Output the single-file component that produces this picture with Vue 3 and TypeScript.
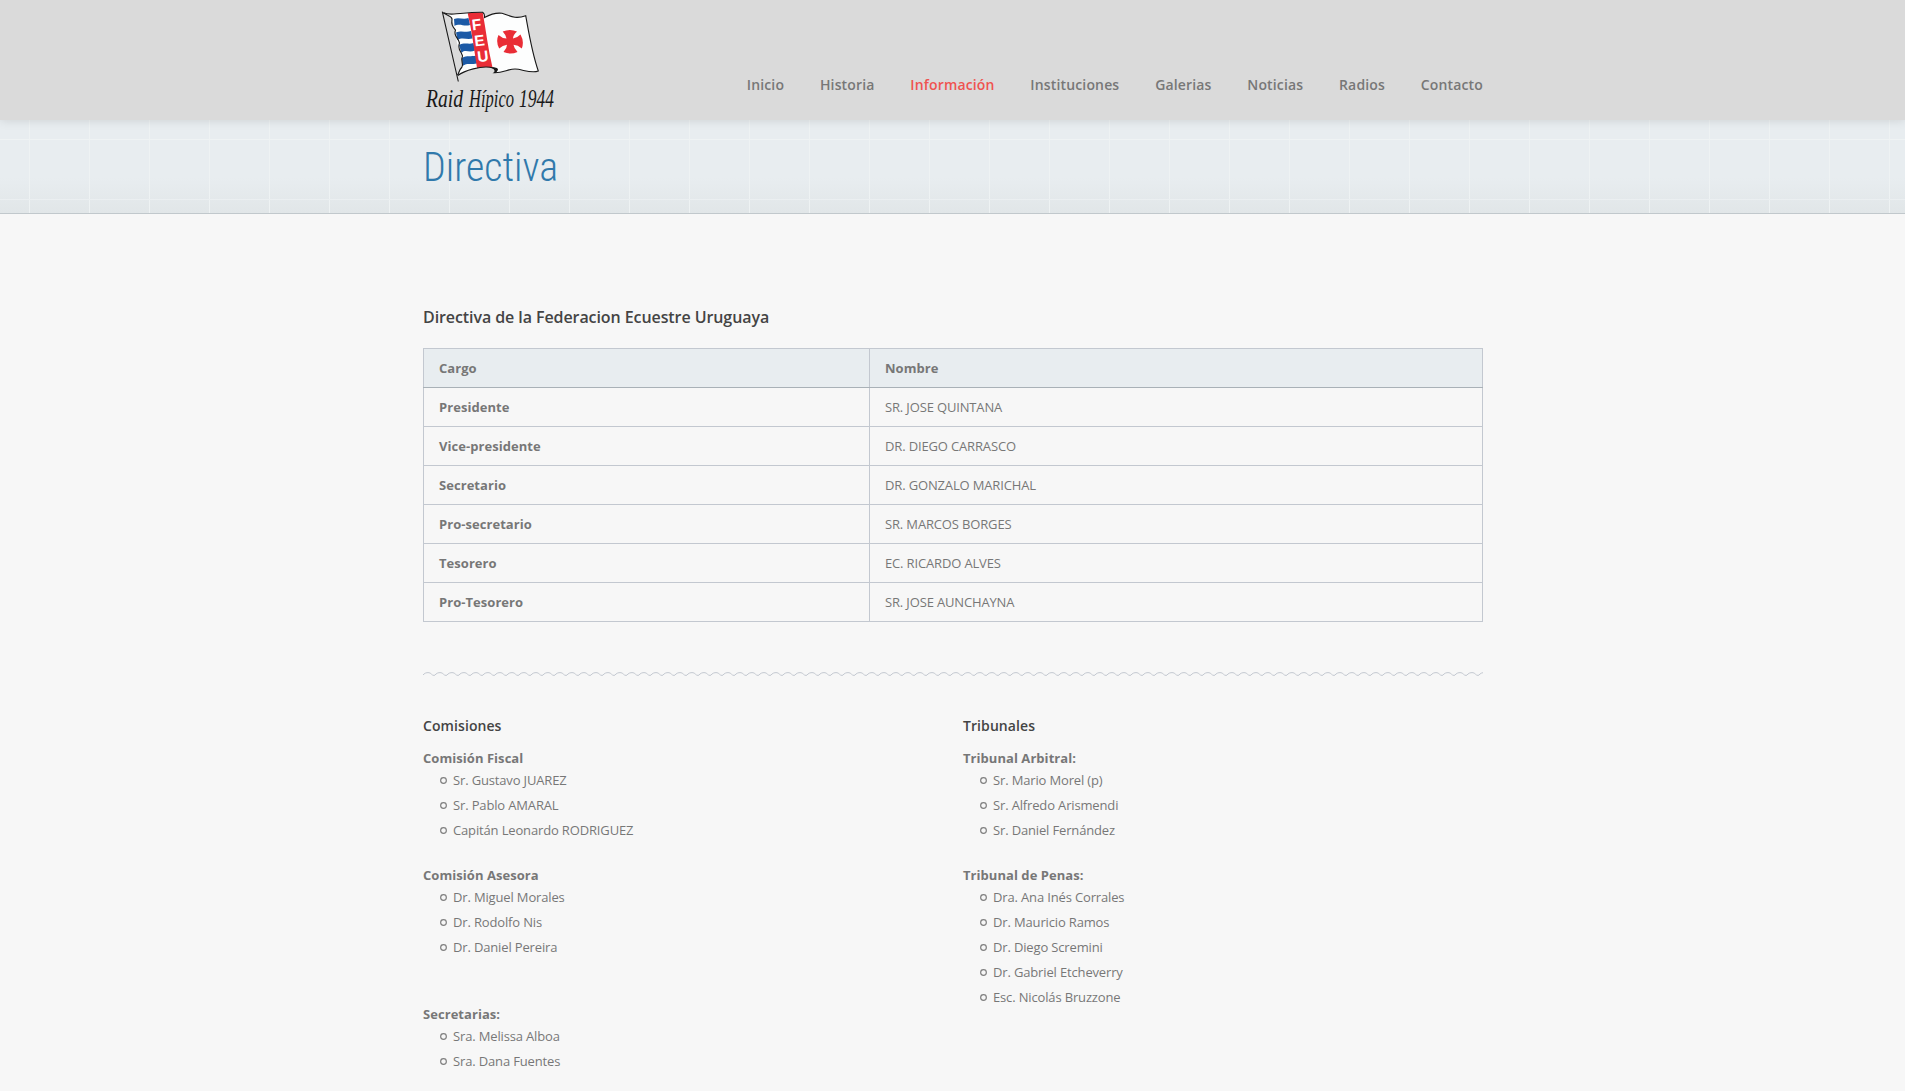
<script setup lang="ts">
interface Group {
  title: string
  people: string[]
  extra?: boolean
}

const nav: string[] = ['Inicio', 'Historia', 'Información', 'Instituciones', 'Galerias', 'Noticias', 'Radios', 'Contacto']
const active = 'Información'

const rows: [string, string][] = [
  ['Presidente', 'SR. JOSE QUINTANA'],
  ['Vice-presidente', 'DR. DIEGO CARRASCO'],
  ['Secretario', 'DR. GONZALO MARICHAL'],
  ['Pro-secretario', 'SR. MARCOS BORGES'],
  ['Tesorero', 'EC. RICARDO ALVES'],
  ['Pro-Tesorero', 'SR. JOSE AUNCHAYNA'],
]

const columns: { heading: string; groups: Group[] }[] = [
  {
    heading: 'Comisiones',
    groups: [
      { title: 'Comisión Fiscal', people: ['Sr. Gustavo JUAREZ', 'Sr. Pablo AMARAL', 'Capitán Leonardo RODRIGUEZ'] },
      { title: 'Comisión Asesora', people: ['Dr. Miguel Morales', 'Dr. Rodolfo Nis', 'Dr. Daniel Pereira'], extra: true },
      { title: 'Secretarias:', people: ['Sra. Melissa Alboa', 'Sra. Dana Fuentes'] },
    ],
  },
  {
    heading: 'Tribunales',
    groups: [
      { title: 'Tribunal Arbitral:', people: ['Sr. Mario Morel (p)', 'Sr. Alfredo Arismendi', 'Sr. Daniel Fernández'] },
      {
        title: 'Tribunal de Penas:',
        people: ['Dra. Ana Inés Corrales', 'Dr. Mauricio Ramos', 'Dr. Diego Scremini', 'Dr. Gabriel Etcheverry', 'Esc. Nicolás Bruzzone'],
      },
    ],
  },
]
</script>

<template>
  <div class="page">
    <header class="header">
      <div class="container header-row">
        <svg class="logo" width="136" height="120" viewBox="0 0 136 120" role="img">
          <!-- flag cloth -->
          <path d="M20.300 12.700Q25 14.500 31 14C38 13.500 50 12 59.700 12.300L62 17.500C68 14 73 12.500 79 13.300C86 15 91 20 102.700 15.700C106 34 109 53 115.300 71C108 74 99 69 92 69C85 69 80 73 71.300 72.700Q77 69 67 67.300C58 66 42 70 34.700 75.500L40 65L38 55L34 43L32 31L29 18Z" fill="#fdfefe" />
          <path d="M31 19C36 17 40 20 45.500 18L47 25C41 27 37 23 31.500 26ZM33 32.500C39 30 43 33 48 31L49.500 38.500C44 40 39 37 34.500 40ZM36 45C42 42 46 45 50.500 43L52 50.500C46 53 42 49 38.500 53ZM39 58C44 55 48 57 53 55.500L55 63C49 65.500 45 62 39.500 66Z" fill="#1c5aa6" />
          <path d="M44.700 13.200C50 12.500 55 12.500 59.700 12.500C63 30 65 49 69.500 67.500C64 66.500 59 67 54 68C51 49 49 31 44.700 13.200Z" fill="#e92d36" />
          <path d="M20.300 12.700Q25 14.500 31 14C38 13.500 50 12 59.700 12.300Q62 14 61.500 17.500C68 14 73 12.500 79 13.300C86 15 91 20 102.700 15.700C106 34 109 53 115.300 71C108 74 99 69 92 69C85 69 80 73 71.300 72.700Q77 69 67 67.300C58 66 42 70 34.700 75.500" fill="none" stroke="#181818" stroke-width="1.100" />
          <path d="M19.300 11.700L35.300 81.500M20.300 12.700C25 16 29 16 29 19C28 25 30 27 32.500 30C30 36 35 37 36.500 43C34 49 38 51 39.500 56C37 61 41 64 39 67C36 70 36 73 34.700 75" fill="none" stroke="#181818" stroke-width="1.100" />
          <path d="M66 67.200C71 67 75 67.500 75 69.500C75 71 73 72.500 71 73C72.500 70 71 68.500 66 67.200Z" fill="#181818" />
          <!-- flared cross -->
          <path d="M79.700 31.500Q87 28.500 94 31.500Q90 35 90 38.500Q94 38 97.500 34.500Q101.500 41.500 98.800 48.500Q95 45 90.500 44.800Q91 48.500 94.500 52Q87.500 55 80.500 52Q84 48.500 84 44.800Q79.500 45.500 76.200 48.500Q72.500 41.500 75.500 35Q79 38.300 83.500 38.500Q83 35 79.700 31.500Z" fill="#e92d36" />
          <g class="letters">
            <text x="53.500" y="30">F</text>
            <text x="56.500" y="46">E</text>
            <text x="60" y="61.500">U</text>
          </g>
          <text class="script" y="107">
            <tspan x="3" textLength="37" lengthAdjust="spacingAndGlyphs">Raid</tspan>
            <tspan x="46" textLength="45" lengthAdjust="spacingAndGlyphs">Hípico</tspan>
            <tspan x="96" textLength="35" lengthAdjust="spacingAndGlyphs">1944</tspan>
          </text>
        </svg>
        <nav class="nav">
          <a v-for="item in nav" :key="item" :class="{ active: item === active }">{{ item }}</a>
        </nav>
      </div>
    </header>

    <section class="banner">
      <div class="container"><h1>Directiva</h1></div>
    </section>

    <main class="container main">
      <h3>Directiva de la Federacion Ecuestre Uruguaya</h3>
      <table>
        <thead>
          <tr><th>Cargo</th><th>Nombre</th></tr>
        </thead>
        <tbody>
          <tr v-for="[role, name] in rows" :key="role">
            <td><strong>{{ role }}</strong></td>
            <td>{{ name }}</td>
          </tr>
        </tbody>
      </table>

      <svg class="wave" width="1060" height="4">
        <defs>
          <pattern id="wave" width="12" height="4" patternUnits="userSpaceOnUse">
            <path d="M-1 3.400Q0 3.400 1 2Q2.500 .6 5 .6T8.500 2.200Q9.500 3.400 11 3.400T13 2" fill="none" stroke="#c3c8d0" />
          </pattern>
        </defs>
        <rect width="1060" height="4" fill="url(#wave)" />
      </svg>

      <div class="columns">
        <div v-for="col in columns" :key="col.heading" class="column">
          <h4>{{ col.heading }}</h4>
          <div v-for="g in col.groups" :key="g.title" class="group" :class="{ extra: g.extra }">
            <strong>{{ g.title }}</strong>
            <ul>
              <li v-for="p in g.people" :key="p">
                <svg class="ring" width="7" height="7"><circle cx="3.500" cy="3.500" r="2.850" /></svg>
                <span>{{ p }}</span>
              </li>
            </ul>
          </div>
        </div>
      </div>
    </main>
  </div>
</template>

<style>
body {
  margin: 0;
  background: #f7f7f7;
}
</style>

<style scoped>
.page {
  height: 1091px;
  overflow: hidden;
  background: #f7f7f7;
  color: #777;
  font: 13px/22px 'Open Sans', sans-serif;
  letter-spacing: -0.15px;
}
.container {
  width: 1060px;
  margin: 0 0 0 calc(50% - 529.5px);
}
.header {
  position: relative;
  height: 120px;
  background: #dadada;
  box-shadow: 0 0 10px rgba(0, 0, 0, 0.13);
}
.header-row {
  display: flex;
  justify-content: space-between;
}
.logo {
  display: block;
  overflow: visible;
}
.letters {
  fill: #fff;
  font: bold 15.5px 'Liberation Sans', sans-serif;
  text-anchor: middle;
  letter-spacing: 0;
}
.letters text {
  transform-box: fill-box;
  transform-origin: center;
  transform: rotate(-7deg);
}
.script {
  fill: #181818;
  font: italic 26px 'Liberation Serif', serif;
  letter-spacing: 0;
}
.nav {
  display: flex;
  gap: 35.8px;
  padding-top: 74px;
  font-size: 14px;
  font-weight: 600;
  letter-spacing: 0.15px;
}
.nav .active {
  color: #ef5350;
}
.banner {
  box-sizing: border-box;
  height: 94px;
  border-bottom: 1px solid #c1c8cc;
  background:
    linear-gradient(#eff3f4, #eff3f4) 0 19px / 100% 1px no-repeat,
    linear-gradient(#ebeff1, #ebeff1) 0 79px / 100% 1px no-repeat,
    repeating-linear-gradient(90deg, transparent 0 29px, #eef2f3 29px 30px, transparent 30px 60px),
    linear-gradient(#e8edf0 62%, #e1e6e8);
}
h1 {
  margin: 0;
  padding-top: 22px;
  color: #3079ab;
  font: 300 40px/52px 'Roboto Condensed', Roboto, sans-serif;
  font-stretch: condensed;
  letter-spacing: 0;
}
.main {
  padding-top: 92px;
}
h3 {
  margin: 0 0 20px;
  color: #444;
  font-size: 16px;
  font-weight: 600;
  line-height: 22px;
  letter-spacing: -0.08px;
}
table {
  width: 1060px;
  border-collapse: collapse;
  table-layout: fixed;
}
th,
td {
  box-sizing: border-box;
  height: 39px;
  padding: 0 15px;
  border: 1px solid #c3c8d0;
  text-align: left;
}
th {
  background: #e8edf0;
  border-bottom-color: #a9b1b7;
  font-weight: 700;
}
th,
strong {
  letter-spacing: 0.05px;
}
th:first-child {
  width: 446px;
}
.wave {
  display: block;
  margin: 50px 0 39px;
}
.columns {
  display: flex;
  gap: 20px;
}
.column {
  width: 520px;
}
h4 {
  margin: 0 0 10px;
  color: #444;
  font-size: 14px;
  font-weight: 600;
  line-height: 22px;
  letter-spacing: 0.08px;
}
.group {
  margin-bottom: 23px;
}
.extra {
  margin-bottom: 45px;
}
.group strong {
  display: block;
}
ul {
  margin: 0;
  padding: 0;
  list-style: none;
}
li {
  display: flex;
  align-items: center;
  height: 22px;
  margin-bottom: 3px;
  padding-left: 17px;
}
.ring {
  margin-right: 6px;
}
.ring circle {
  fill: none;
  stroke: #808080;
  stroke-width: 1.2;
}
</style>
